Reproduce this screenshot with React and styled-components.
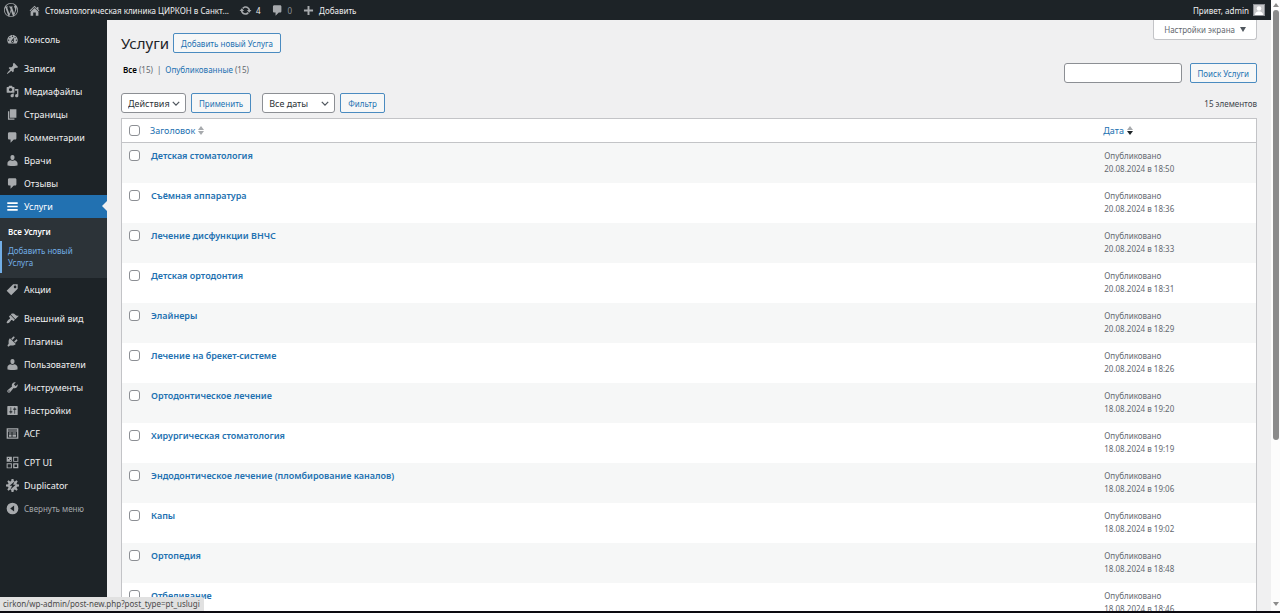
import styled, { createGlobalStyle, css } from 'styled-components';

const GlobalStyle = createGlobalStyle`
  * {
    box-sizing: border-box;
  }

  body {
    margin: 0;
    background: #f0f0f1;
    color: #3c434a;
    font-family: 'Noto Sans', 'Open Sans', sans-serif;
    font-size: 8px;
    line-height: 13px;
  }

  button, input, select {
    font-family: inherit;
    font-size: inherit;
    line-height: inherit;
    margin: 0;
  }

  a {
    color: #2271b1;
    text-decoration: none;
  }
`;

const icons = {
  home: 'M16 8.5l1.53 1.53-1.06 1.06L10 4.6l-6.47 6.49-1.06-1.06L10 2.5l4 4v-2h2v4zm-6-2.46l6 5.99V18h-4v-5H8v5H4v-5.97z',
  update:
    'M10.2 3.28c3.53 0 6.43 2.61 6.92 6h2.08l-3.5 4-3.5-4h2.32c-.45-1.97-2.21-3.45-4.32-3.45-1.45 0-2.73.71-3.54 1.78L4.95 5.66C6.23 4.2 8.11 3.28 10.2 3.28zm-.4 13.44c-3.52 0-6.43-2.61-6.92-6H.8l3.5-4c1.17 1.33 2.33 2.67 3.5 4H5.48c.45 1.97 2.21 3.45 4.32 3.45 1.45 0 2.73-.71 3.54-1.78l1.71 1.95c-1.28 1.46-3.15 2.38-5.25 2.38z',
  plus: 'M17 8.5v3h-5.5V17h-3v-5.5H3v-3h5.5V3h3v5.5z',
  dashboard:
    'M3.76 16h12.48c1.1-1.37 1.76-3.11 1.76-5 0-4.42-3.58-8-8-8s-8 3.58-8 8c0 1.89.66 3.63 1.76 5zM10 4c.55 0 1 .45 1 1s-.45 1-1 1-1-.45-1-1 .45-1 1-1zM6 6c.55 0 1 .45 1 1s-.45 1-1 1-1-.45-1-1 .45-1 1-1zm8 0c.55 0 1 .45 1 1s-.45 1-1 1-1-.45-1-1 .45-1 1-1zm-5.37 5.55L12 7v6c0 1.1-.9 2-2 2s-2-.9-2-2c0-.57.24-1.08.63-1.45zM4 10c.55 0 1 .45 1 1s-.45 1-1 1-1-.45-1-1 .45-1 1-1zm12 0c.55 0 1 .45 1 1s-.45 1-1 1-1-.45-1-1 .45-1 1-1zm-5 3c0-.55-.45-1-1-1s-1 .45-1 1 .45 1 1 1 1-.45 1-1z',
  pin: 'M10.44 3.02l1.82-1.82 6.36 6.35-1.83 1.82c-1.05-.68-2.48-.57-3.41.36l-.75.75c-.92.93-1.04 2.35-.35 3.41l-1.83 1.82-2.41-2.41-2.8 2.79c-.42.42-3.38 2.71-3.8 2.29s1.86-3.39 2.28-3.81l2.79-2.79L4.1 9.36l1.83-1.82c1.05.69 2.48.57 3.4-.36l.75-.75c.93-.92 1.05-2.35.36-3.41z',
  media:
    'M13 11V4c0-.55-.45-1-1-1h-1.67L9 1H5L3.67 3H2c-.55 0-1 .45-1 1v7c0 .55.45 1 1 1h10c.55 0 1-.45 1-1zM7 4.5c1.38 0 2.5 1.12 2.5 2.5S8.38 9.5 7 9.5 4.5 8.38 4.5 7 5.62 4.5 7 4.5zM14 6h5v10.5c0 1.38-1.12 2.5-2.5 2.5S14 17.88 14 16.5s1.12-2.5 2.5-2.5c.17 0 .34.02.5.05V9h-3V6zm-4 8.05V13h2v3.5c0 1.38-1.12 2.5-2.5 2.5S7 17.88 7 16.5 8.12 14 9.5 14c.17 0 .34.02.5.05z',
  page: 'M6 15V2h10v13H6zm-1 1h8v2H3V5h2v11z',
  comment:
    'M5 2h9c1.1 0 2 .9 2 2v7c0 1.1-.9 2-2 2h-2l-5 5v-5H5c-1.1 0-2-.9-2-2V4c0-1.1.9-2 2-2z',
  user: 'M10 9.6c-2.7 0-3.1-3.8-3.1-3.8C6.600 3.900 7.600 1.700 9.970 1.700c2.400 0 3.400 2.200 3.110 4.100 0 0-.41 3.800-3.080 3.800zM10 10.600L12.720 9.500c2.390 0 5.020 2.330 5.020 4.530v3.490s-3.650 1.130-7.740 1.130c-4.150 0-7.740-1.130-7.740-1.130v-3.490c0-2.250 2.440-4.480 4.970-4.480z',
  menu: 'M18 6V3.500H2V6h16zm0 5.250v-2.500H2v2.500h16zm0 5.250V14H2v2.500h16z',
  tag: 'M11 2h7v7L8 19l-7-7zm3 6c1.100 0 2-.9 2-2s-.9-2-2-2-2 .9-2 2 .9 2 2 2z',
  brush:
    'M14.48 11.06L7.41 3.99l1.5-1.5c.5-.56 2.3-.47 3.51.32 1.21.8 1.43 1.28 2.91 2.1 1.18.64 2.45 1.26 4.45.85zm-.71.71L6.7 4.7 4.93 6.47c-.39.39-.39 1.02 0 1.41l1.06 1.06c.39.39.39 1.03 0 1.42-.6.6-1.43 1.11-2.21 1.69-.35.26-.7.53-1.01.84C1.43 14.23.4 16.08 1.4 17.07c.99 1 2.84-.03 4.18-1.36.31-.31.58-.66.85-1.02.57-.78 1.08-1.61 1.69-2.21.39-.39 1.02-.39 1.41 0l1.06 1.06c.39.39 1.02.39 1.41 0z',
  plugin:
    'M13.11 4.36L9.87 7.6 8 5.73l3.24-3.24c.35-.34 1.05-.2 1.56.32.52.51.66 1.21.31 1.55zm-8 1.77l.91-1.12 9.01 9.01-1.19.84c-.71.71-2.63 1.16-3.82 1.16H6.14L4.9 17.26c-.59.59-1.54.59-2.12 0-.59-.58-.59-1.53 0-2.12l1.24-1.24v-3.88c0-1.13.4-3.19 1.09-3.89zm7.26 3.97l3.24-3.24c.34-.35 1.04-.21 1.55.31.52.51.66 1.21.31 1.55l-3.24 3.25z',
  wrench:
    'M16.68 9.77c-1.34 1.34-3.3 1.67-4.95.99l-5.41 6.52c-.99.99-2.59.99-3.58 0s-.99-2.59 0-3.57l6.52-5.42c-.68-1.65-.35-3.61.99-4.95 1.28-1.28 3.12-1.62 4.72-1.06l-2.89 2.89 2.82 2.82 2.86-2.87c.53 1.58.18 3.39-1.08 4.65zM3.81 16.21c.4.39 1.04.39 1.43 0 .4-.4.4-1.04 0-1.43-.39-.4-1.03-.4-1.43 0-.39.39-.39 1.03 0 1.43z',
  settings:
    'M18 16V4c0-.55-.45-1-1-1H3c-.55 0-1 .45-1 1v12c0 .55.45 1 1 1h14c.55 0 1-.45 1-1zM8 11h1c.55 0 1 .45 1 1s-.45 1-1 1H8v1.5c0 .28-.22.5-.5.5s-.5-.22-.5-.5V13H6c-.55 0-1-.45-1-1s.45-1 1-1h1V5.5c0-.28.22-.5.5-.5s.5.22.5.5V11zm5-2h-1c-.55 0-1-.45-1-1s.45-1 1-1h1V5.5c0-.28.22-.5.5-.5s.5.22.5.5V7h1c.55 0 1 .45 1 1s-.45 1-1 1h-1v5.5c0 .28-.22.5-.5.5s-.5-.22-.5-.5V9z',
  form: 'M1 2h18v16H1zM3 7v9h14V7zM4.5 8.5h4v1.5h-4zm0 3h4V15h-4zm5.5-3h5.5v1.5H10zm0 3h5.5V15H10zM3 4v1.2h14V4z',
  blocks:
    'M1 1h8v8H1zM3 3v1.5h1.500V3zm3 3v1.500h1.500V6zM11 1h8v8h-8zM12.500 2.500v5h5v-5zM1 11h8v8H1zM2.500 12.500v5h5v-5zM11 11h8v8h-8zM13 13v4h4v-4z',
  gear: 'M8.500 0h3l.6 3.200 1.500.6L16.200 2 18 3.800l-1.800 2.600.6 1.500 3.200.6v3l-3.200.6-.6 1.500 1.800 2.600-1.800 1.800-2.600-1.800-1.500.6-.6 3.200h-3l-.6-3.200-1.500-.6L3.800 18 2 16.200l1.800-2.600-.6-1.500L0 11.500v-3l3.200-.6.6-1.500L2 3.800 3.800 2l2.600 1.800 1.500-.6zM13 4L5.500 10.500h4l-3 6L15 9h-4z',
  collapse:
    'M10 1a9 9 0 1 0 0 18 9 9 0 0 0 0-18zM12.500 5.500v9L6.500 10z',
  wordpress:
    'M20 10c0-5.510-4.490-10-10-10C4.480 0 0 4.490 0 10c0 5.520 4.480 10 10 10 5.510 0 10-4.480 10-10zM7.780 15.370L4.370 6.220c.55-.02 1.170-.08 1.170-.08.5-.06.44-1.130-.06-1.110 0 0-1.450.11-2.370.11-.18 0-.37 0-.58-.01C4.120 2.690 6.870 1.110 10 1.110c2.330 0 4.450.87 6.050 2.340-.68-.11-1.650.39-1.650 1.580 0 .74.45 1.360.9 2.100.35.61.55 1.360.55 2.460 0 1.490-1.400 5-1.400 5l-3.030-8.370c.54-.02.82-.17.82-.17.5-.05.44-1.250-.06-1.220 0 0-1.440.12-2.380.12-.87 0-2.330-.12-2.330-.12-.5-.03-.56 1.200-.06 1.220l.92.08 1.260 3.410zM17.410 10c.24-.64.74-1.870.43-4.250.7 1.290 1.050 2.710 1.050 4.250 0 3.290-1.730 6.240-4.400 7.780.97-2.590 1.940-5.200 2.920-7.780zM6.100 18.090C3.120 16.650 1.110 13.530 1.110 10c0-1.300.23-2.480.72-3.590C3.250 10.300 4.670 14.200 6.100 18.090zm4.030-6.630l2.580 6.980c-.86.29-1.760.45-2.710.45-.79 0-1.570-.11-2.290-.33.81-2.380 1.620-4.740 2.420-7.100z',
};

const Svg = styled.svg`
  width: ${props => props.$size}px;
  height: ${props => props.$size}px;
  flex: none;
  fill: currentColor;
`;

const Icon = ({ name, size = 13 }) => (
  <Svg $size={size} viewBox="0 0 20 20" aria-hidden="true">
    <path fillRule="evenodd" d={icons[name]} />
  </Svg>
);

const Screen = styled.div`
  height: 100vh;
  display: grid;
  grid-template: minmax(0, 1fr) 2px / minmax(0, 1fr) 9px;
  overflow: hidden;
  position: relative;
`;

const Page = styled.div`
  display: grid;
  grid-template: 20px minmax(0, 1fr) / 107px minmax(0, 1fr);
  overflow: hidden;
`;

const AdminBar = styled.header`
  grid-column: 1 / -1;
  display: flex;
  align-items: center;
  gap: 10px;
  padding: 0 6px 0 4px;
  background: #1d2327;
`;

const BarLink = styled.a`
  display: flex;
  align-items: center;
  gap: 4px;
  color: ${props => (props.$dim ? '#8c9196' : '#f0f0f1')};
  white-space: nowrap;

  svg {
    color: #a7aaad;
  }
`;

const Account = styled(BarLink)`
  margin-left: auto;
`;

const Avatar = styled.svg`
  width: 12px;
  height: 12px;
  border: 1px solid #8c8f94;
  background: #c5c6c8;
`;

const Sidebar = styled.nav`
  background: #1d2327;
  padding-top: 8px;
`;

const MenuItem = styled.a`
  position: relative;
  display: flex;
  align-items: center;
  gap: 5px;
  height: 23px;
  padding-left: 6px;
  margin-top: ${props => (props.$spaced ? 6 : 0)}px;
  color: #f0f0f1;
  font-size: 9px;
  white-space: nowrap;

  svg {
    color: #a7aaad;
  }

  ${props =>
    props.$active &&
    css`
      background: #2271b1;
      color: #fff;

      svg {
        color: #fff;
      }

      &::after {
        content: '';
        position: absolute;
        right: 0;
        top: 6px;
        border: 5px solid transparent;
        border-right-color: #f0f0f1;
        border-left: 0;
      }
    `}
`;

const CollapseButton = styled(MenuItem).attrs({ as: 'button', type: 'button' })`
  border: 0;
  padding-right: 0;
  background: none;
  color: #a7aaad;
  font-size: 8px;
`;

const Submenu = styled.div`
  height: 60px;
  padding-top: 5px;
  background: #2c3338;
`;

const SubmenuLink = styled.a`
  display: block;
  padding: 3px 8px;
  line-height: 12px;
  color: #72aee6;
  border-left: 0 solid #72aee6;

  ${props =>
    props.$current &&
    css`
      color: #fff;
      font-weight: 600;
    `}

  ${props =>
    props.$hovered &&
    css`
      border-left-width: 2px;
      padding: 4px 16px 4px 6px;
    `}
`;

const Main = styled.main`
  padding: 0 14px;
  overflow: hidden;
`;

const Row = styled.div`
  display: flex;
  align-items: center;
  justify-content: space-between;
`;

const TitleRow = styled(Row)`
  height: 40px;
  align-items: flex-start;
`;

const Heading = styled.div`
  display: flex;
  align-items: center;
  gap: 4px;
  padding-top: 13px;

  h1 {
    margin: 0;
    color: #1d2327;
    font-size: 15px;
    font-weight: 400;
    line-height: 20px;
  }
`;

const buttonStyle = css`
  height: 20px;
  padding: 0 7px;
  border: 1px solid #4a8bc0;
  border-radius: 2px;
  background: #f6f7f7;
  color: #2271b1;
  white-space: nowrap;
`;

const Button = styled.button`
  ${buttonStyle}
`;

const ButtonLink = styled.a`
  ${buttonStyle}
  display: flex;
  align-items: center;
`;

const ScreenOptions = styled.button`
  display: flex;
  align-items: center;
  gap: 5px;
  height: 20px;
  padding: 0 10px;
  border: 1px solid #c3c4c7;
  border-top: 0;
  border-radius: 0 0 3px 3px;
  background: #fff;
  color: #646970;
`;

const Triangle = styled.span`
  border: 3px solid transparent;
  border-top: 5px solid #50575e;
  border-bottom: 0;
`;

const FilterRow = styled(Row)`
  height: 33px;
  align-items: flex-start;
`;

const Views = styled.div`
  padding: 3px 2px;
  color: #646970;

  strong {
    color: #000;
    font-weight: 600;
  }
`;

const Divider = styled.span`
  margin: 0 4px;
`;

const Search = styled.form`
  display: flex;
  gap: 8px;
  padding-top: 3px;

  input {
    width: 118px;
    height: 20px;
    border: 1px solid #8c8f94;
    border-radius: 3px;
    background: #fff;
  }
`;

const TableNav = styled(Row)`
  height: 20px;
  margin-bottom: 5px;
`;

const Actions = styled.div`
  display: flex;
  gap: 5px;
  margin-right: 11px;
`;

const Select = styled.select`
  appearance: none;
  width: ${props => props.$width}px;
  height: 20px;
  padding: 0 6px;
  border: 1px solid #8c8f94;
  border-radius: 3px;
  background: #fff
    url("data:image/svg+xml,%3Csvg xmlns='http://www.w3.org/2000/svg' viewBox='0 0 10 6'%3E%3Cpath d='M1 1l4 4 4-4' fill='none' stroke='%2350575e' stroke-width='1.6'/%3E%3C/svg%3E")
    no-repeat right 5px center / 8px 5px;
  color: #2c3338;
  font-size: 9px;
`;

const Count = styled.span`
  margin-left: auto;
`;

const Table = styled.table`
  width: 100%;
  table-layout: fixed;
  border: 1px solid #c3c4c7;
  border-collapse: separate;
  border-spacing: 0;
  background: #fff;

  th,
  td {
    padding: 6px 7px 0;
    text-align: left;
    vertical-align: top;
    font-weight: 400;
  }

  td {
    color: #646970;
  }

  thead th {
    height: 24px;
    padding: 0 6px;
    vertical-align: middle;
    border-bottom: 1px solid #c3c4c7;
    font-size: 9px;
  }

  tbody tr {
    height: 40px;
  }

  tbody tr:nth-child(odd) {
    background: #f6f7f7;
  }

  tbody a {
    display: block;
    font-size: 9px;
    font-weight: 600;
  }
`;

const CheckColumn = styled.col`
  width: 22px;
`;

const DateColumn = styled.col`
  width: 14%;
`;

const Checkbox = styled.input.attrs({ type: 'checkbox' })`
  appearance: none;
  display: block;
  width: 11px;
  height: 11px;
  border: 1px solid #8c8f94;
  border-radius: 3px;
  background: #fff;
`;

const CheckCell = styled.th`
  && {
    padding-right: 0;
    padding-left: 7px;
  }

  tbody & {
    padding-top: 7px;
  }
`;

const SortLink = styled.a`
  display: flex;
  align-items: center;
  gap: 3px;

  svg {
    width: 6px;
    height: 10px;
  }
`;

const SortArrows = ({ desc }) => (
  <svg viewBox="0 0 6 10" aria-hidden="true">
    <path d="M0 4l3-4 3 4z" fill="#a7aaad" />
    <path d="M0 5h6L3 9z" fill={desc ? '#1d2327' : '#a7aaad'} />
  </svg>
);

const Scrollbar = styled.div`
  display: flex;
  flex-direction: column;
  align-items: center;
  justify-content: space-between;
  padding: 3px 0 5px;
  background: #fcfcfc;
`;

const ScrollArrow = styled.span`
  border: 3px solid transparent;
  border-top: ${props => (props.$down ? '4px solid #8b8b8b' : 0)};
  border-bottom: ${props => (props.$down ? 0 : '4px solid #8b8b8b')};
`;

const ScrollTrack = styled.div`
  flex: 1;
  width: 6px;
  padding: 3px 0;
`;

const ScrollThumb = styled.div`
  height: 73%;
  border-radius: 3px;
  background: #8b8b8b;
`;

const BottomEdge = styled.div`
  grid-column: 1 / -1;
  background: #0c0a10;
`;

const StatusHint = styled.div`
  position: absolute;
  left: 0;
  bottom: 2px;
  height: 14px;
  padding: 0 4px 0 3px;
  border-radius: 0 2px 0 0;
  background: #e1e1e1;
  color: #4a4a4a;
`;

const topMenu = [
  { icon: 'dashboard', label: 'Консоль' },
  { icon: 'pin', label: 'Записи', spaced: true },
  { icon: 'media', label: 'Медиафайлы' },
  { icon: 'page', label: 'Страницы' },
  { icon: 'comment', label: 'Комментарии' },
  { icon: 'user', label: 'Врачи' },
  { icon: 'comment', label: 'Отзывы' },
  { icon: 'menu', label: 'Услуги', active: true },
];

const bottomMenu = [
  { icon: 'tag', label: 'Акции' },
  { icon: 'brush', label: 'Внешний вид', spaced: true },
  { icon: 'plugin', label: 'Плагины' },
  { icon: 'user', label: 'Пользователи' },
  { icon: 'wrench', label: 'Инструменты' },
  { icon: 'settings', label: 'Настройки' },
  { icon: 'form', label: 'ACF' },
  { icon: 'blocks', label: 'CPT UI', spaced: true },
  { icon: 'gear', label: 'Duplicator' },
];

const services = [
  { title: 'Детская стоматология', date: '20.08.2024 в 18:50' },
  { title: 'Съёмная аппаратура', date: '20.08.2024 в 18:36' },
  { title: 'Лечение дисфункции ВНЧС', date: '20.08.2024 в 18:33' },
  { title: 'Детская ортодонтия', date: '20.08.2024 в 18:31' },
  { title: 'Элайнеры', date: '20.08.2024 в 18:29' },
  { title: 'Лечение на брекет-системе', date: '20.08.2024 в 18:26' },
  { title: 'Ортодонтическое лечение', date: '18.08.2024 в 19:20' },
  { title: 'Хирургическая стоматология', date: '18.08.2024 в 19:19' },
  {
    title: 'Эндодонтическое лечение (пломбирование каналов)',
    date: '18.08.2024 в 19:06',
  },
  { title: 'Капы', date: '18.08.2024 в 19:02' },
  { title: 'Ортопедия', date: '18.08.2024 в 18:48' },
  { title: 'Отбеливание', date: '18.08.2024 в 18:46' },
];

const Menu = ({ items }) =>
  items.map(item => (
    <MenuItem
      key={item.label}
      href="#"
      $spaced={item.spaced}
      $active={item.active}
    >
      <Icon name={item.icon} />
      {item.label}
    </MenuItem>
  ));

const App = () => {
  return (
    <Screen>
      <GlobalStyle />
      <Page>
        <AdminBar>
          <BarLink href="#" aria-label="WordPress">
            <Icon name="wordpress" size={14} />
          </BarLink>
          <BarLink href="#">
            <Icon name="home" />
            Стоматологическая клиника ЦИРКОН в Санкт...
          </BarLink>
          <BarLink href="#">
            <Icon name="update" />4
          </BarLink>
          <BarLink href="#" $dim>
            <Icon name="comment" />0
          </BarLink>
          <BarLink href="#">
            <Icon name="plus" />
            Добавить
          </BarLink>
          <Account href="#">
            Привет, admin
            <Avatar viewBox="0 0 10 10">
              <circle cx="5" cy="3.5" r="2.3" fill="#fff" />
              <path d="M1 10c0-5 8-5 8 0z" fill="#fff" />
            </Avatar>
          </Account>
        </AdminBar>

        <Sidebar>
          <Menu items={topMenu} />
          <Submenu>
            <SubmenuLink href="#" $current>
              Все Услуги
            </SubmenuLink>
            <SubmenuLink href="#" $hovered>
              Добавить новый Услуга
            </SubmenuLink>
          </Submenu>
          <Menu items={bottomMenu} />
          <CollapseButton>
            <Icon name="collapse" />
            Свернуть меню
          </CollapseButton>
        </Sidebar>

        <Main>
          <TitleRow>
            <Heading>
              <h1>Услуги</h1>
              <ButtonLink href="#">Добавить новый Услуга</ButtonLink>
            </Heading>
            <ScreenOptions type="button">
              Настройки экрана
              <Triangle />
            </ScreenOptions>
          </TitleRow>

          <FilterRow>
            <Views>
              <strong>Все</strong> (15)
              <Divider>|</Divider>
              <a href="#">Опубликованные</a> (15)
            </Views>
            <Search>
              <input type="search" aria-label="Поиск Услуги" />
              <Button type="button">Поиск Услуги</Button>
            </Search>
          </FilterRow>

          <TableNav>
            <Actions>
              <Select $width={65} aria-label="Действия">
                <option>Действия</option>
              </Select>
              <Button type="button">Применить</Button>
            </Actions>
            <Actions>
              <Select $width={73} aria-label="Все даты">
                <option>Все даты</option>
              </Select>
              <Button type="button">Фильтр</Button>
            </Actions>
            <Count>15 элементов</Count>
          </TableNav>

          <Table>
            <colgroup>
              <CheckColumn />
              <col />
              <DateColumn />
            </colgroup>
            <thead>
              <tr>
                <CheckCell>
                  <Checkbox aria-label="Выделить все" />
                </CheckCell>
                <th>
                  <SortLink href="#">
                    Заголовок
                    <SortArrows />
                  </SortLink>
                </th>
                <th>
                  <SortLink href="#">
                    Дата
                    <SortArrows desc />
                  </SortLink>
                </th>
              </tr>
            </thead>
            <tbody>
              {services.map(item => (
                <tr key={item.title}>
                  <CheckCell>
                    <Checkbox aria-label={item.title} />
                  </CheckCell>
                  <td>
                    <a href="#">{item.title}</a>
                  </td>
                  <td>
                    Опубликовано
                    <br />
                    {item.date}
                  </td>
                </tr>
              ))}
            </tbody>
          </Table>
        </Main>
      </Page>

      <Scrollbar>
        <ScrollArrow />
        <ScrollTrack>
          <ScrollThumb />
        </ScrollTrack>
        <ScrollArrow $down />
      </Scrollbar>
      <BottomEdge />
      <StatusHint>cirkon/wp-admin/post-new.php?post_type=pt_uslugi</StatusHint>
    </Screen>
  );
};

export default App;
